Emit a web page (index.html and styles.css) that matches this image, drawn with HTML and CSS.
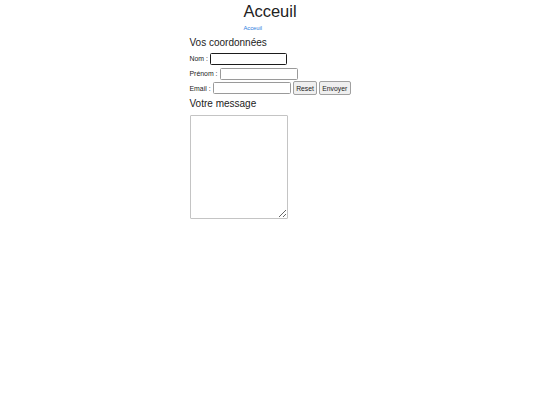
FILE: index.html
```html
<!DOCTYPE html>
<html lang="fr">
<head>
<meta charset="utf-8">
<title>Acceuil</title>
<link rel="stylesheet" href="styles.css">
</head>
<body>
<header class="site-header">
  <h1 class="title">Acceuil</h1>
  <nav class="nav"><a class="nav-link" href="#">Acceuil</a></nav>
</header>
<main class="page">
  <form class="contact">
    <h2 class="section-title">Vos coordonnées</h2>
    <div class="row">
      <label class="label" for="nom">Nom :</label>
      <input class="field field-focus" id="nom" type="text">
    </div>
    <div class="row">
      <label class="label" for="prenom">Prénom :</label>
      <input class="field" id="prenom" type="text">
    </div>
    <div class="row">
      <label class="label" for="email">Email :</label>
      <input class="field" id="email" type="email">
      <button class="btn" type="reset">Reset</button>
      <button class="btn" type="submit">Envoyer</button>
    </div>
    <h2 class="section-title section-title-msg">Votre message</h2>
    <textarea class="message"></textarea>
  </form>
</main>
</body>
</html>
```

FILE: styles.css
```css
html, body {
  margin: 0;
  padding: 0;
  background: #ffffff;
}

body {
  font-family: "Liberation Sans", Arial, sans-serif;
  color: #222222;
  font-size: 6.9px;
}

.site-header {
  width: fit-content;
  margin: 0 auto;
  padding-top: 1.5px;
}

.title {
  margin: 0;
  font-size: 16.5px;
  font-weight: normal;
  line-height: 19px;
  color: #222222;
}

.nav {
  margin-top: 4.6px;
  line-height: 6.4px;
}

.nav-link {
  font-size: 5.8px;
  color: #2b7de0;
  text-decoration: none;
}

.page {
  width: 160px;
  margin: 0 auto;
}

.contact {
  display: flex;
  flex-direction: column;
  align-items: flex-start;
}

.section-title {
  margin: 5px 0 3.6px -0.5px;
  font-size: 10px;
  font-weight: normal;
  line-height: 11.5px;
  color: #222222;
}

.section-title-msg {
  margin-top: 2.4px;
  margin-bottom: 5px;
}

.row {
  display: flex;
  align-items: center;
  height: 14.7px;
  gap: 1.6px;
}

.label {
  margin-right: 1px;
  margin-left: -0.5px;
  white-space: nowrap;
}

.field {
  box-sizing: border-box;
  width: 78px;
  height: 12px;
  margin: 0;
  padding: 0 2px;
  border: 1px solid #9a9a9a;
  border-radius: 1.5px;
  background: #ffffff;
  font: inherit;
}

.field-focus {
  border: 1.5px solid #1b1b1b;
  width: 76.5px;
  height: 12.7px;
  outline: none;
}

.field:focus {
  outline: none;
}

.btn {
  box-sizing: border-box;
  height: 14px;
  margin: 0;
  padding: 0 2.4px;
  border: 1px solid #a0a0a0;
  border-radius: 2px;
  background: #efefef;
  color: #222222;
  font-family: inherit;
  font-size: 6.8px;
}

.message {
  box-sizing: border-box;
  width: 98px;
  height: 104px;
  margin: 0;
  border: 1px solid #c4c4c4;
  border-radius: 1px;
  background: #ffffff;
}
```
